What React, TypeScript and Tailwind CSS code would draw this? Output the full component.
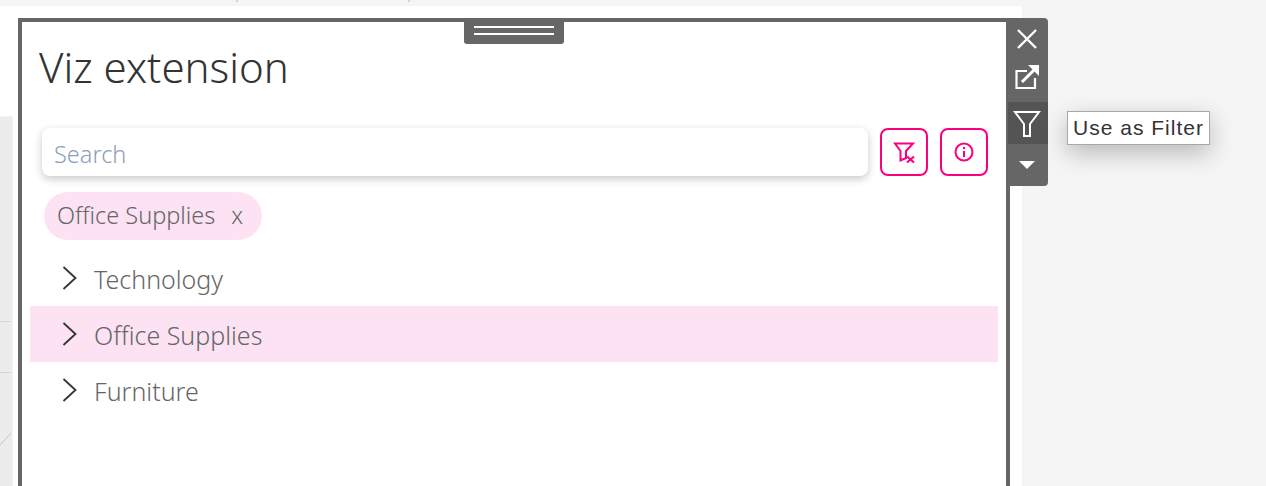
const tableauFont = "font-['Noto_Sans',sans-serif]"

function Chevron() {
  return (
    <svg width="16" height="24" viewBox="0 0 16 24" fill="none" stroke="#333333" strokeWidth="1.8" className="flex-none">
      <path d="M1.5 1 L13.5 12 L1.5 23" />
    </svg>
  )
}

function TreeRow({label, active}: {label: string, active?: boolean}) {
  return (
    <div className={`flex h-[56px] items-center pl-[32px] ${active ? 'bg-[#fde2f3]' : ''}`}>
      <Chevron />
      <span className="ml-[16px] pt-[3px] text-[25px] font-light text-[#666666]">{label}</span>
    </div>
  )
}

function ToolButton({children, hover}: {children: React.ReactNode, hover?: boolean}) {
  return (
    <div className={`flex h-[42px] w-[40px] items-center justify-center pr-[2px] ${hover ? 'bg-[#545454]' : ''}`}>
      {children}
    </div>
  )
}

export default function App() {
  return (
    <div className={`relative h-[486px] w-[1266px] overflow-hidden bg-[#f5f5f5] ${tableauFont}`}>
      <div className="absolute left-[236px] top-0 h-[2px] w-[2px] bg-[#d4d4d4]" />
      <div className="absolute left-[408px] top-0 h-[2px] w-[2px] bg-[#d4d4d4]" />

      <div className="mt-[6px] h-[480px] w-[1022px] bg-white pt-[110px]">
        <div className="relative h-[370px] w-[13px] border-r border-t border-[#f3f3f3] bg-[#ececec]">
          <div className="absolute left-0 top-[204px] h-px w-[11px] bg-[#d6d6d6]" />
          <div className="absolute left-0 top-[255px] h-px w-[11px] bg-[#d6d6d6]" />
          <svg width="12" height="14" viewBox="0 0 12 14" className="absolute left-0 top-[315px]" fill="none" stroke="#c4c4c4">
            <path d="M11 1 L0 13" />
          </svg>
        </div>
      </div>

      {/* floating extension frame */}
      <div className="absolute left-[18px] top-[18px] flex">
        <div className="relative h-[480px] w-[992px] border-4 border-[#666666] bg-white pl-[17px]">
          <div className="absolute left-[442px] top-0 flex h-[22px] w-[100px] flex-col items-center gap-[5px] rounded-b-[3px] bg-[#666666] pt-[4px]">
            <div className="h-[2px] w-[80px] bg-white" />
            <div className="h-[2px] w-[80px] bg-white" />
          </div>

          <h1 className="mt-[18px] text-[42px] font-light leading-[54px] text-[#333333]">Viz extension</h1>

          <div className="mt-[34px] flex items-center">
            <div className="ml-[3px] flex h-[48px] w-[826px] items-center rounded-[8px] bg-white pl-[12px] shadow-[0_3px_8px_rgba(0,0,0,0.22)]">
              <span className="pt-[6px] text-[23.5px] font-light text-[#8ea0b8]">Search</span>
            </div>
            <div className="ml-[12px] flex h-[48px] w-[48px] items-center justify-center rounded-[8px] border-2 border-[#fb0080]">
              <svg width="24" height="24" viewBox="0 0 24 24" fill="none" stroke="#fb0080" strokeWidth="2">
                <path d="M3 3.5 H21 L14 11 V18 L8.5 20.5 V11 Z" />
                <path d="M15 16.5 L22 22.5 M22 16.5 L15 22.5" strokeWidth="2.2" />
              </svg>
            </div>
            <div className="ml-[12px] flex h-[48px] w-[48px] items-center justify-center rounded-[8px] border-2 border-[#fb0080]">
              <svg width="24" height="24" viewBox="0 0 24 24" fill="none" stroke="#fb0080" strokeWidth="2">
                <circle cx="12" cy="12" r="8.5" />
                <path d="M12 11 V17 M12 7 V9" />
              </svg>
            </div>
          </div>

          <div className="ml-[5px] mt-[16px] inline-flex h-[48px] items-center rounded-full bg-[#fde2f3] pl-[13px] pr-[19px]">
            <span className="text-[23.5px] font-light text-[#666666]">Office Supplies</span>
            <span className="ml-[16px] text-[23.5px] font-light text-[#666666]">x</span>
          </div>

          <div className="-ml-[9px] mr-[8px] mt-[10px]">
            <TreeRow label="Technology" />
            <TreeRow label="Office Supplies" active />
            <TreeRow label="Furniture" />
          </div>
        </div>

        <div className="relative -ml-[2px] flex h-[168px] w-[40px] flex-col rounded-r-[4px] bg-[#666666]">
          <ToolButton>
            <svg width="24" height="24" viewBox="0 0 24 24" fill="none" stroke="white" strokeWidth="2.4">
              <path d="M3 3 L21 21 M21 3 L3 21" />
            </svg>
          </ToolButton>
          <ToolButton>
            <svg width="24" height="24" viewBox="0 0 24 24" fill="none" stroke="white" strokeWidth="2.2" className="-translate-y-[4px]">
              <path d="M12 6 H1.5 V23 H20 V13" />
              <path d="M7 17 L20 4" strokeWidth="3" />
              <path d="M13 0 H24 V11 Z" fill="white" stroke="none" />
            </svg>
          </ToolButton>
          <ToolButton hover>
            <svg width="28" height="28" viewBox="0 0 28 28" fill="none" stroke="white" strokeWidth="2" className="translate-y-[1px]">
              <path d="M2 2 H26 L17 14 V26 H11 V14 Z" />
            </svg>
          </ToolButton>
          <ToolButton>
            <svg width="16" height="10" viewBox="0 0 16 10" fill="white"><path d="M0 1 H16 L8 9 Z" /></svg>
          </ToolButton>
        </div>
      </div>

      {/* tooltip */}
      <div className="absolute left-[1067px] top-[111px] flex h-[34px] w-[143px] items-center justify-center border border-[#a8a8a8] bg-white font-['Liberation_Sans',sans-serif] text-[21px] tracking-[1px] text-[#333333] shadow-[0_8px_24px_rgba(0,0,0,0.25)]">
        Use as Filter
      </div>
    </div>
  )
}
